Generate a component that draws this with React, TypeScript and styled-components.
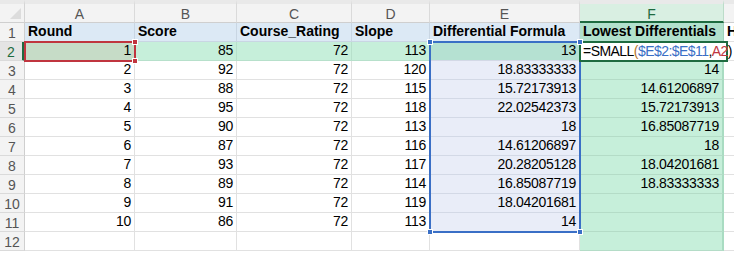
import React from 'react';
import styled, { createGlobalStyle, css } from 'styled-components';

const GlobalStyle = createGlobalStyle`
  html, body {
    margin: 0;
    padding: 0;
    background: #ffffff;
  }
  body {
    font-family: "Liberation Sans Narrow", "Liberation Sans", sans-serif;
    overflow: hidden;
  }
`;

const BLUE_ROW = '#dce9f5';
const MINT = '#c6efda';
const RANGE = '#e9edf8';
const BLUE = '#3a6fc6';
const RED = '#c0353f';
const DARK_GREEN = '#1e6b40';

const gridTemplate = css`
  display: grid;
  grid-template-columns: 25px 110px 102px 115px 78px 150px 144px 1fr;
  grid-template-rows: 23px repeat(12, 19px);
  width: 734px;
  height: 256px;
`;

const Wrap = styled.div`
  position: relative;
  width: 734px;
  height: 256px;
  overflow: hidden;
`;

const Sheet = styled.div`
  ${gridTemplate};
  font-family: "Liberation Sans Narrow", "Liberation Sans", sans-serif;
  font-size: 14px;
  color: #000;
`;

const Overlay = styled.div`
  ${gridTemplate};
  position: absolute;
  inset: 0;
  pointer-events: none;
`;

const Corner = styled.div`
  position: relative;
  background: #f3f3f3;
  border-top: 4px solid #e9e9e9;
  border-right: 1px solid #d4d4d4;
  border-bottom: 1px solid #cfcfcf;
  box-sizing: border-box;

  &::after {
    content: '';
    position: absolute;
    right: 3px;
    bottom: 3px;
    width: 0;
    height: 0;
    border-left: 11px solid transparent;
    border-bottom: 11px solid #dcdcdc;
  }
`;

const ColHeader = styled.div<{ $active?: boolean }>`
  display: flex;
  align-items: center;
  justify-content: center;
  box-sizing: border-box;
  border-top: 4px solid #e9e9e9;
  border-right: 1px solid ${(p) => (p.$active ? '#bcdcc9' : '#dadada')};
  border-bottom: ${(p) => (p.$active ? `2px solid ${DARK_GREEN}` : '1px solid #cfcfcf')};
  background: ${(p) => (p.$active ? '#d9efe2' : '#f3f3f3')};
  color: ${(p) => (p.$active ? DARK_GREEN : '#555555')};
  font-family: "Liberation Sans", sans-serif;
  font-size: 14px;
  padding-top: ${(p) => (p.$active ? 2 : 1)}px;
`;

const RowHeader = styled.div<{ $active?: boolean }>`
  display: flex;
  align-items: center;
  justify-content: center;
  box-sizing: border-box;
  background: ${(p) => (p.$active ? '#e4e4e4' : '#f3f3f3')};
  border-right: ${(p) => (p.$active ? `3px solid ${DARK_GREEN}` : '1px solid #cfcfcf')};
  border-bottom: 1px solid #dadada;
  color: ${(p) => (p.$active ? DARK_GREEN : '#555555')};
  font-family: "Liberation Sans", sans-serif;
  font-size: 14px;
  padding-top: 1px;
`;

const Cell = styled.div<{ $bg?: string; $bold?: boolean; $left?: boolean; $line?: string; $edge?: boolean }>`
  display: flex;
  align-items: flex-end;
  justify-content: ${(p) => (p.$left ? 'flex-start' : 'flex-end')};
  box-sizing: border-box;
  padding: 0 3px 2px 3px;
  background: ${(p) => p.$bg || '#ffffff'};
  border-right: ${(p) => (p.$edge ? '2px solid #a9dcc2' : `1px solid ${p.$line || '#e1e1e1'}`)};
  border-bottom: 1px solid ${(p) => p.$line || '#e1e1e1'};
  font-weight: ${(p) => (p.$bold ? 700 : 400)};
  letter-spacing: ${(p) => (p.$bold ? '0' : '-0.3px')};
  white-space: nowrap;
  line-height: 16px;
`;

const Frame = styled.div<{ $color: string; $col: string; $row: string }>`
  position: relative;
  grid-column: ${(p) => p.$col};
  grid-row: ${(p) => p.$row};
  margin: -1px -1px -1px -1px;
  box-sizing: border-box;
  border: 2px solid ${(p) => p.$color};
`;

const Handle = styled.div<{ $color: string; $x: 'l' | 'r'; $y: 't' | 'b' }>`
  position: absolute;
  z-index: 3;
  width: 6px;
  height: 6px;
  box-sizing: border-box;
  background: ${(p) => p.$color};
  border: 1px solid #ffffff;
  ${(p) => (p.$x === 'l' ? 'left: -4px;' : 'right: -4px;')}
  ${(p) => (p.$y === 't' ? 'top: -4px;' : 'bottom: -4px;')}
`;

const EditCell = styled.div`
  grid-column: 7;
  grid-row: 3;
  z-index: 2;
  margin: -1px -4px -1px -1px;
  box-sizing: border-box;
  display: flex;
  align-items: flex-end;
  background: #ffffff;
  border: 2px solid ${DARK_GREEN};
  padding: 0 0 1px 2px;
  line-height: 16px;
  white-space: nowrap;
  font-family: "Liberation Sans Narrow", "Liberation Sans", sans-serif;
  font-size: 14px;
  letter-spacing: -0.55px;
  color: #000;
`;

const Ref = styled.span<{ $color: string }>`
  color: ${(p) => p.$color};
`;

const headers = ['Round', 'Score', 'Course_Rating', 'Slope', 'Differential Formula', 'Lowest Differentials'];

const data: [number, number, number, number, string, string][] = [
  [1, 85, 72, 113, '13', ''],
  [2, 92, 72, 120, '18.83333333', '14'],
  [3, 88, 72, 115, '15.72173913', '14.61206897'],
  [4, 95, 72, 118, '22.02542373', '15.72173913'],
  [5, 90, 72, 113, '18', '16.85087719'],
  [6, 87, 72, 116, '14.61206897', '18'],
  [7, 93, 72, 117, '20.28205128', '18.04201681'],
  [8, 89, 72, 114, '16.85087719', '18.83333333'],
  [9, 91, 72, 119, '18.04201681', ''],
  [10, 86, 72, 113, '14', ''],
];

export default function App() {
  return (
    <>
      <GlobalStyle />
      <Wrap>
        <Sheet>
          <Corner />
          {['A', 'B', 'C', 'D', 'E', 'F', ''].map((c) => (
            <ColHeader key={c || 'g'} $active={c === 'F'}>
              {c}
            </ColHeader>
          ))}

          <RowHeader>1</RowHeader>
          {headers.map((h, i) => (
            <Cell key={h} $bold $left $bg={i === 5 ? '#b2e1cd' : BLUE_ROW} $line={i === 5 ? '#9fd2bb' : '#c9d6e3'}>
              {h}
            </Cell>
          ))}
          <Cell $bold $left>H</Cell>

          {data.map((row, idx) => {
            const r = idx + 2;
            const first = r === 2;
            const line = first ? '#b7e0cb' : undefined;
            return (
              <React.Fragment key={r}>
                <RowHeader $active={first}>{r}</RowHeader>
                <Cell $bg={first ? '#c6dcc7' : undefined}>{row[0]}</Cell>
                <Cell $bg={first ? MINT : undefined} $line={line}>{row[1]}</Cell>
                <Cell $bg={first ? MINT : undefined} $line={line}>{row[2]}</Cell>
                <Cell $bg={first ? MINT : undefined} $line={line}>{row[3]}</Cell>
                <Cell $bg={first ? '#b5e1d2' : RANGE} $line="#d3d9e6">{row[4]}</Cell>
                {first ? <Cell /> : <Cell $edge $bg={MINT} $line="#b4dcc7">{row[5]}</Cell>}
                <Cell />
              </React.Fragment>
            );
          })}

          <RowHeader>12</RowHeader>
          <Cell />
          <Cell />
          <Cell />
          <Cell />
          <Cell />
          <Cell $edge $bg={MINT} $line="#b4dcc7" />
          <Cell />
        </Sheet>

        <Overlay>
          <Frame $color={BLUE} $col="6" $row="3 / 13">
            <Handle $color={BLUE} $x="l" $y="t" />
            <Handle $color={BLUE} $x="r" $y="t" />
            <Handle $color={BLUE} $x="l" $y="b" />
            <Handle $color={BLUE} $x="r" $y="b" />
          </Frame>
          <Frame $color={RED} $col="2" $row="3">
            <Handle $color={RED} $x="r" $y="t" />
            <Handle $color={RED} $x="r" $y="b" />
          </Frame>
          <EditCell>
            =SMALL<Ref $color="#b8742a">(</Ref>
            <Ref $color={BLUE}>$E$2:$E$11</Ref>,<Ref $color={RED}>A2</Ref>)
          </EditCell>
        </Overlay>
      </Wrap>
    </>
  );
}
